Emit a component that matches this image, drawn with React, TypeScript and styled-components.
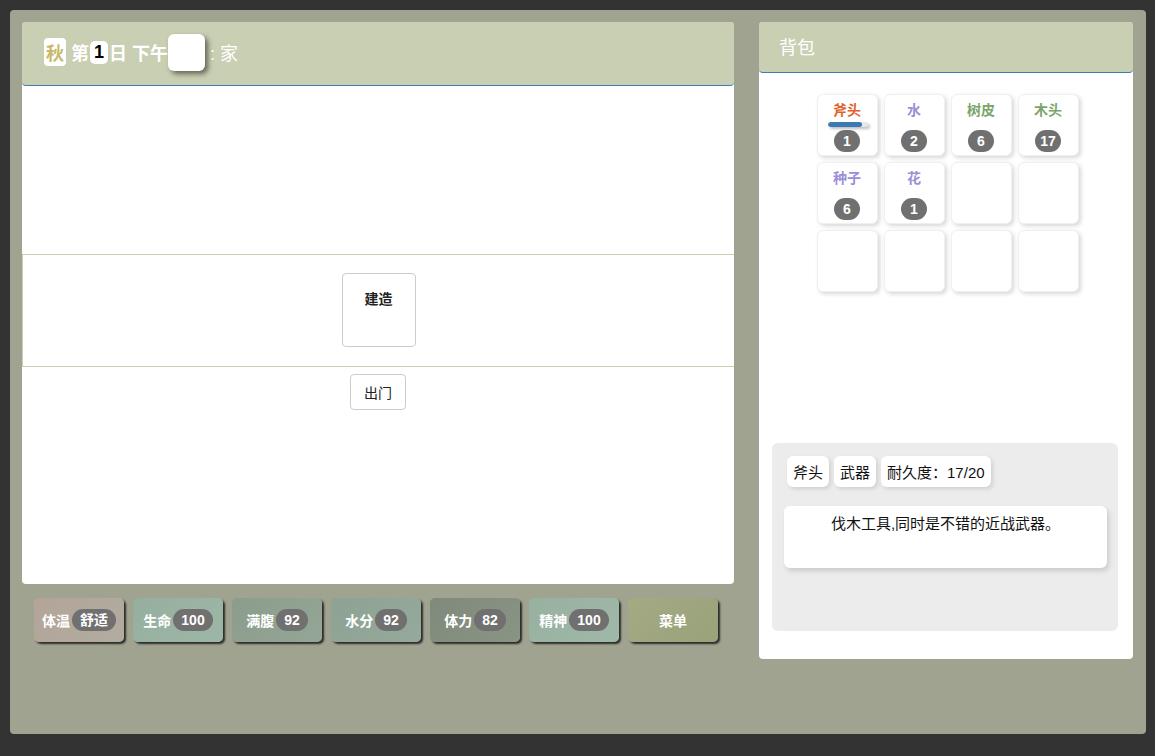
import React from "react";
import styled, { createGlobalStyle } from "styled-components";

const GlobalStyle = createGlobalStyle`
  html, body {
    margin: 0;
    padding: 0;
    background: #333333;
    font-family: "Liberation Sans", "Noto Sans CJK SC", sans-serif;
  }
`;

const Page = styled.div`
  padding: 10px;
  width: 1155px;
  height: 756px;
  box-sizing: border-box;
`;

const Frame = styled.div`
  width: 1136px;
  height: 724px;
  box-sizing: border-box;
  background: #a0a38f;
  border-radius: 4px;
  padding: 12px;
  display: flex;
  gap: 25px;
  align-items: flex-start;
`;

const LeftColumn = styled.div`
  width: 712px;
  display: flex;
  flex-direction: column;
`;

const Panel = styled.div<{ $h: number; $w?: number }>`
  background: #ffffff;
  border-radius: 4px;
  height: ${(p) => p.$h}px;
  width: ${(p) => (p.$w ? `${p.$w}px` : "auto")};
  display: flex;
  flex-direction: column;
`;

const PanelHeader = styled.div<{ $h: number }>`
  height: ${(p) => p.$h}px;
  flex-shrink: 0;
  box-sizing: border-box;
  background: #c9cfb2;
  border-bottom: 1px solid #3c7ab4;
  border-radius: 4px;
  display: flex;
  align-items: center;
  padding: 0 0 3px 20px;
  color: #ffffff;
  font-size: 18px;
`;

const Strong = styled.span`
  font-weight: bold;
`;

const Season = styled.span`
  background: #ffffff;
  color: #c8b96a;
  font-weight: bold;
  border-radius: 4px;
  padding: 1px 2px;
  margin-left: 2px;
  margin-right: 5px;
`;

const DayNum = styled.span`
  background: #ffffff;
  color: #000000;
  font-weight: bold;
  border-radius: 5px;
  padding: 1px 4px;
  margin-left: 1px;
  margin-right: 1px;
`;

const Blank = styled.span`
  display: inline-block;
  width: 37px;
  height: 37px;
  background: #ffffff;
  border-radius: 6px;
  box-shadow: 3px 3px 5px rgba(60, 60, 50, 0.7);
  margin: 0 3px 0 0;
`;

const Place = styled.span`
  margin-left: 2px;
`;

const Spacer = styled.div<{ $h: number }>`
  height: ${(p) => p.$h}px;
  flex-shrink: 0;
`;

const BuildRow = styled.div`
  height: 113px;
  box-sizing: border-box;
  border: 1px solid #c9cfb2;
  border-right: none;
  display: flex;
  justify-content: center;
  padding-top: 18px;
`;

const BuildButton = styled.div`
  width: 74px;
  height: 74px;
  box-sizing: border-box;
  border: 1px solid #cccccc;
  border-radius: 4px;
  text-align: center;
  font-size: 14px;
  font-weight: bold;
  color: #222222;
  padding-top: 14px;
`;

const ExitRow = styled.div`
  display: flex;
  justify-content: center;
  padding-top: 7px;
`;

const ExitButton = styled.div`
  width: 56px;
  height: 36px;
  box-sizing: border-box;
  border: 1px solid #cccccc;
  border-radius: 4px;
  font-size: 14px;
  color: #222222;
  display: flex;
  align-items: center;
  justify-content: center;
`;

const StatusBar = styled.div`
  display: flex;
  gap: 9px;
  padding: 14px 0 0 12px;
`;

const StatButton = styled.div<{ $bg: string }>`
  width: 90px;
  height: 44px;
  box-sizing: border-box;
  border-radius: 5px;
  background: ${(p) => p.$bg};
  box-shadow: 2px 2px 2px #2a2a2a;
  display: flex;
  align-items: center;
  justify-content: center;
  color: #ffffff;
  font-weight: bold;
  font-size: 14px;
`;

const StatBadge = styled.span`
  background: #707070;
  border-radius: 11px;
  padding: 2px 8px;
  margin-left: 2px;
  line-height: 18px;
`;

const Bag = styled.div`
  display: grid;
  grid-template-columns: repeat(4, 61px);
  grid-auto-rows: 62px;
  gap: 6px;
  justify-content: center;
  padding: 21px 0 0 3px;
  height: 209px;
`;

const Cell = styled.div`
  background: #ffffff;
  border: 1px solid #f0f0f0;
  border-radius: 6px;
  box-shadow: 2px 2px 4px rgba(0, 0, 0, 0.16);
  display: flex;
  flex-direction: column;
  align-items: center;
  position: relative;
`;

const ItemName = styled.div<{ $c: string }>`
  color: ${(p) => p.$c};
  font-weight: bold;
  font-size: 14px;
  margin-top: 4px;
`;

const Count = styled.div`
  position: absolute;
  top: 35px;
  left: 50%;
  transform: translateX(-50%);
  background: #707070;
  color: #ffffff;
  font-weight: bold;
  font-size: 14px;
  border-radius: 11px;
  min-width: 26px;
  height: 22px;
  line-height: 22px;
  text-align: center;
  padding: 0 4px;
  box-sizing: border-box;
`;

const Durability = styled.div`
  position: absolute;
  top: 27px;
  left: 10px;
  width: 40px;
  height: 5px;
  background: #e8e8e8;
  border-radius: 3px;
  box-shadow: 2px 2px 3px rgba(0, 0, 0, 0.25);
  overflow: hidden;
`;

const DurabilityFill = styled.div`
  height: 100%;
  background: #3c7ab4;
  border-radius: 3px;
`;

const Detail = styled.div`
  margin: 140px 15px 0 13px;
  height: 188px;
  background: #ececec;
  border-radius: 6px;
  padding: 13px 11px 0 12px;
  box-sizing: border-box;
`;

const Tags = styled.div`
  display: flex;
  gap: 5px;
  padding-left: 3px;
`;

const Tag = styled.div`
  background: #ffffff;
  border-radius: 6px;
  box-shadow: 2px 2px 4px rgba(0, 0, 0, 0.12);
  height: 31px;
  padding: 0 6px;
  display: flex;
  align-items: center;
  font-size: 15px;
  color: #111111;
`;

const Description = styled.div`
  margin-top: 19px;
  height: 62px;
  background: #ffffff;
  border-radius: 6px;
  box-shadow: 2px 3px 5px rgba(0, 0, 0, 0.14);
  text-align: center;
  font-size: 15px;
  color: #111111;
  padding-top: 6px;
  box-sizing: border-box;
`;

type Item = { name: string; color: string; count: number; durability?: number };

const items: (Item | null)[] = [
  { name: "斧头", color: "#e0622a", count: 1, durability: 17 / 20 },
  { name: "水", color: "#9a8fd8", count: 2 },
  { name: "树皮", color: "#7aa56a", count: 6 },
  { name: "木头", color: "#7aa56a", count: 17 },
  { name: "种子", color: "#9a8fd8", count: 6 },
  { name: "花", color: "#9a8fd8", count: 1 },
  null,
  null,
  null,
  null,
  null,
  null,
];

const stats = [
  { label: "体温", value: "舒适", bg: "linear-gradient(135deg, #b3a498, #b2aca0)" },
  { label: "生命", value: "100", bg: "linear-gradient(135deg, #96ae9e, #9db7a6)" },
  { label: "满腹", value: "92", bg: "linear-gradient(135deg, #8c9c8c, #94a697)" },
  { label: "水分", value: "92", bg: "linear-gradient(135deg, #8ea293, #96aa9c)" },
  { label: "体力", value: "82", bg: "linear-gradient(135deg, #7f8a7c, #899483)" },
  { label: "精神", value: "100", bg: "linear-gradient(135deg, #98b0a0, #a0b8a8)" },
];

const App = () => {
  return (
    <Page>
      <GlobalStyle />
      <Frame>
        <LeftColumn>
          <Panel $h={562}>
            <PanelHeader $h={64}>
              <Season>秋</Season>
              <Strong>第</Strong>
              <DayNum>1</DayNum>
              <Strong>日 下午</Strong>
              <Blank />
              <Place>: 家</Place>
            </PanelHeader>
            <Spacer $h={168} />
            <BuildRow>
              <BuildButton>建造</BuildButton>
            </BuildRow>
            <ExitRow>
              <ExitButton>出门</ExitButton>
            </ExitRow>
          </Panel>
          <StatusBar>
            {stats.map((s) => (
              <StatButton key={s.label} $bg={s.bg}>
                {s.label}
                <StatBadge>{s.value}</StatBadge>
              </StatButton>
            ))}
            <StatButton $bg="linear-gradient(135deg, #a3aa84, #9aa27a)">菜单</StatButton>
          </StatusBar>
        </LeftColumn>
        <Panel $h={637} $w={374}>
          <PanelHeader $h={51}>背包</PanelHeader>
          <Bag>
            {items.map((it, i) => (
              <Cell key={i}>
                {it && (
                  <>
                    <ItemName $c={it.color}>{it.name}</ItemName>
                    {it.durability !== undefined && (
                      <Durability>
                        <DurabilityFill style={{ width: `${it.durability * 100}%` }} />
                      </Durability>
                    )}
                    <Count>{it.count}</Count>
                  </>
                )}
              </Cell>
            ))}
          </Bag>
          <Detail>
            <Tags>
              <Tag>斧头</Tag>
              <Tag>武器</Tag>
              <Tag>耐久度：17/20</Tag>
            </Tags>
            <Description>伐木工具,同时是不错的近战武器。</Description>
          </Detail>
        </Panel>
      </Frame>
    </Page>
  );
};

export default App;
